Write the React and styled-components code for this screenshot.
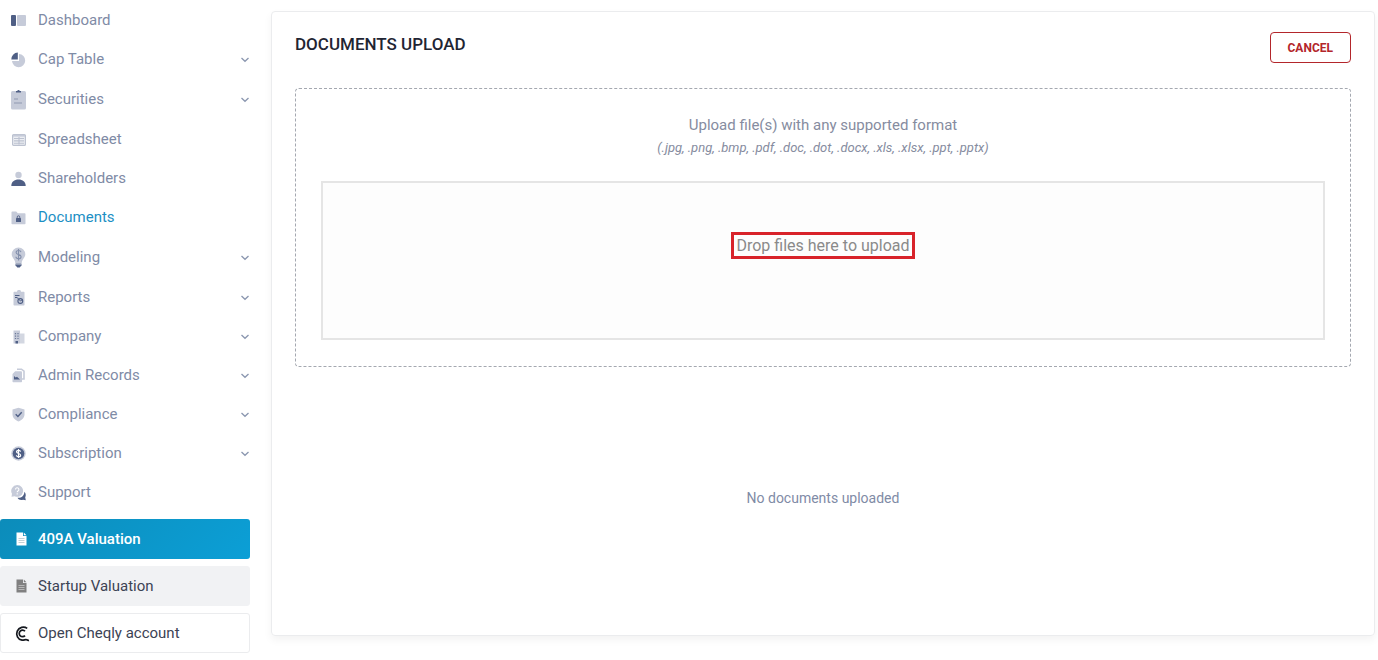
import React, { useState } from "react";
import styled, { createGlobalStyle, css } from "styled-components";

const GlobalStyle = createGlobalStyle`
  * {
    box-sizing: border-box;
  }
  body {
    margin: 0;
    background: #fff;
    font-family: Roboto, "Liberation Sans", sans-serif;
    font-size: 15px;
    line-height: 19px;
    color: #7f8ba6;
  }
`;

const Page = styled.div`
  display: flex;
  gap: 21px;
  padding-right: 3px;
`;

const Sidebar = styled.aside`
  flex: 0 0 250px;
  padding-top: 1px;
`;

const Menu = styled.ul`
  margin: 0;
  padding: 0;
  list-style: none;
`;

const MenuLink = styled.a`
  display: flex;
  align-items: center;
  padding: 10px 0 10px 11px;
  color: ${(props) => (props.$active ? "#1c8fc4" : "#7f8ba6")};
  text-decoration: none;
`;

const MenuIcon = styled.span`
  display: flex;
  flex: 0 0 15px;
  justify-content: center;
  margin-right: 12px;
`;

const MenuText = styled.span`
  flex: 1;
`;

const Chevron = styled.svg`
  width: 10px;
  height: 10px;
  fill: none;
  stroke: #8b97b0;
  stroke-width: 1.3;
`;

const Shortcuts = styled.div`
  display: flex;
  flex-direction: column;
  gap: 7px;
  margin-top: 7px;
`;

const shortcutKinds = {
  primary: css`
    background: linear-gradient(135deg, #0c8cba, #0c9fd6);
    border-color: transparent;
    background-origin: border-box;
    color: #fff;
    font-weight: 500;
  `,
  muted: css`
    background: #f1f2f4;
    border-color: #f1f2f4;
    color: #3c4354;
  `,
  outline: css`
    background: #fff;
    border-color: #ebecee;
    color: #3c4354;
  `,
};

const Shortcut = styled.a`
  display: flex;
  align-items: center;
  min-height: 40px;
  padding: 9px 12px;
  border: 1px solid;
  border-radius: 3px;
  text-decoration: none;
  ${(props) => shortcutKinds[props.$kind]}
`;

const ShortcutIcon = styled.span`
  display: flex;
  flex: 0 0 17px;
  justify-content: center;
  margin-right: 8px;
`;

const Main = styled.main`
  display: flex;
  flex: 1;
  min-width: 0;
  padding: 11px 0 17px;
`;

const Card = styled.section`
  display: flex;
  flex: 1;
  flex-direction: column;
  min-width: 0;
  padding: 20px 23px 6px;
  border: 1px solid #ebecee;
  border-radius: 4px;
  box-shadow: 0 4px 8px rgba(0, 0, 0, 0.05);
`;

const CardHeader = styled.header`
  display: flex;
  align-items: flex-start;
  justify-content: space-between;
  margin-bottom: 25px;
`;

const Title = styled.h1`
  margin: 3px 0 0;
  color: #1f2533;
  font-size: 17px;
  font-weight: 500;
  line-height: 19px;
`;

const CancelButton = styled.button`
  height: 31px;
  padding: 0 17px;
  border: 1px solid #b3262b;
  border-radius: 4px;
  background: #fff;
  color: #b3262b;
  font-family: inherit;
  font-size: 12px;
  font-weight: 700;
  cursor: pointer;
`;

const UploadBox = styled.div`
  padding: 27px 25px 26px;
  border: 1px dashed #a4a8b0;
  border-radius: 4px;
  text-align: center;
`;

const UploadTitle = styled.p`
  margin: 0;
  color: #868ca0;
`;

const UploadFormats = styled.p`
  margin: 3px 0 24px;
  color: #868ca0;
  font-size: 13px;
  font-style: italic;
`;

const DropZone = styled.label`
  display: block;
  height: 159px;
  padding-top: 49px;
  border: 2px solid #e5e5e5;
  background: #fdfdfd;
  cursor: pointer;
`;

const DropText = styled.span`
  display: inline-block;
  padding: 1px 2px;
  border: 3px solid #d8232a;
  color: #8a8a8a;
  font-size: 16px;
`;

const FileInput = styled.input`
  display: none;
`;

const EmptyState = styled.p`
  display: flex;
  flex: 1;
  align-items: center;
  justify-content: center;
  margin: 0;
  font-size: 14px;
`;

const DARK = "#4f5f85";
const LIGHT = "#c6cbd9";

const DashboardIcon = () => (
  <svg width="15" height="11" viewBox="0 0 15 11">
    <rect width="5" height="11" rx="1" fill={DARK} />
    <rect x="6" width="9" height="11" rx="1" fill={LIGHT} />
  </svg>
);

const CapTableIcon = () => (
  <svg width="15" height="16" viewBox="0 0 15 16">
    <path d="M8 2a6.6 6.6 0 1 1-7 7h7z" fill={LIGHT} />
    <path d="M6.8 0.5v7H0.3a6.8 6.8 0 0 1 6.5-7z" fill={DARK} />
  </svg>
);

const SecuritiesIcon = () => (
  <svg width="15" height="21" viewBox="0 0 15 21">
    <rect y="2" width="15" height="18.5" rx="1.6" fill={LIGHT} />
    <path d="M5 3.5V2h1.2a1.4 1.4 0 0 1 2.6 0H10v1.5z" fill={DARK} />
    <path d="M3 10h4M3 14h8" stroke="#a3abbf" strokeWidth="1.3" />
  </svg>
);

const SpreadsheetIcon = () => (
  <svg width="14" height="12" viewBox="0 0 14 12">
    <rect x="0.6" y="0.6" width="12.8" height="10.8" rx="1" fill="#eceef3" stroke="#bcc2d0" strokeWidth="1.2" />
    <path d="M1 1.7h12" stroke={LIGHT} strokeWidth="1.8" />
    <path d="M2 4.5h10M2 6.9h10M2 9.2h10M7 3v7.5" stroke="#bcc2d0" strokeWidth="1.1" />
  </svg>
);

const ShareholdersIcon = () => (
  <svg width="15" height="16" viewBox="0 0 15 16">
    <circle cx="7.5" cy="4" r="3.2" fill={LIGHT} />
    <path d="M0.3 15c0-4 3-6.4 7.2-6.4s7.2 2.4 7.2 6.4z" fill={DARK} />
  </svg>
);

const DocumentsIcon = () => (
  <svg width="15" height="14" viewBox="0 0 15 14">
    <path d="M0.5 1.3q0-.8.8-.8h3.9l1.6 1.8h6.9q.8 0 .8.8v9.4q0 .8-.8.8H1.3q-.8 0-.8-.8z" fill={LIGHT} />
    <rect x="5" y="7" width="5" height="4" rx="0.6" fill={DARK} />
    <path d="M6.2 7.2V6.1a1.3 1.3 0 0 1 2.6 0v1.1" fill="none" stroke={DARK} strokeWidth="0.9" />
  </svg>
);

const ModelingIcon = () => (
  <svg width="15" height="21" viewBox="0 0 15 21">
    <path d="M7.5 0.5a6.8 6.8 0 0 1 6.8 6.8c0 3.6-3.3 4.7-3.6 8.7H4.3C4 12 .7 10.9.7 7.3A6.8 6.8 0 0 1 7.5.5z" fill={LIGHT} />
    <path d="M10 5.2C9.7 3.9 8.8 3.5 7.5 3.5S5.1 4.2 5.1 5.500c0 2.900 5 1.400 5 4.200 0 1.300-1.100 2-2.600 2S5 11.100 4.900 9.800M7.500 2v11.500" fill="none" stroke="#8490ac" strokeWidth="1.1" />
    <path d="M4.5 16.500h6v2q0 .8-.8.8l-1 1.200H6.300l-1-1.200q-.8 0-.8-.8z" fill={DARK} />
    <path d="M4.5 17.600h6" stroke={LIGHT} strokeWidth="0.6" />
  </svg>
);

const ReportsIcon = () => (
  <svg width="12" height="16" viewBox="0 0 12 16">
    <path d="M0.5 2.5q0-.7.7-.7H4a2 2 0 0 1 4 0h2.800q.7 0 .7.700v12.300q0 .7-.7.700H1.200q-.7 0-.7-.7z" fill={LIGHT} />
    <path d="M2 5.500h4.500M2 7.500h2.500" stroke={DARK} strokeWidth="1.200" />
    <circle cx="7.300" cy="11" r="2.400" fill="none" stroke={DARK} strokeWidth="1.100" />
    <path d="M4.500 8l3 3 2-1.500" fill="none" stroke={DARK} />
  </svg>
);

const CompanyIcon = () => (
  <svg width="12" height="14" viewBox="0 0 12 14">
    <path d="M0.500 0.500h6.500v13H.500z" fill={LIGHT} />
    <path d="M7 3.500h4.500v10H7z" fill="#d3d7e1" />
    <path d="M2.500 3v6M5 3v6" stroke="#6d7a9a" strokeWidth="1.200" strokeDasharray="1.300 1.200" />
    <path d="M2.500 11h2.500v2.500H2.500z" fill={DARK} />
  </svg>
);

const AdminIcon = () => (
  <svg width="13" height="15" viewBox="0 0 13 15">
    <path d="M5 1.200h4.500L12 3.200v7.800h-2" fill="none" stroke={LIGHT} strokeWidth="1.600" />
    <path d="M3.200 3.200h5.800q1 0 1 1V13.500q0 .7-.7.700H1.200q-.7 0-.7-.7V6z" fill={LIGHT} />
    <path d="M2 11.500V8l1.700 1.500 1.300-.7 3 2.700z" fill={DARK} />
  </svg>
);

const ComplianceIcon = () => (
  <svg width="13" height="15" viewBox="0 0 13 15">
    <path d="M6.500.700l6 1.900v4.600c0 3.500-2.700 6-6 7.200-3.300-1.200-6-3.700-6-7.200V2.600z" fill={LIGHT} />
    <path d="M3.700 7.300l2.200 2.200L9.700 5.300" fill="none" stroke={DARK} strokeWidth="1.400" />
  </svg>
);

const SubscriptionIcon = () => (
  <svg width="15" height="15" viewBox="0 0 15 15">
    <circle cx="7.500" cy="7.500" r="7.200" fill={LIGHT} />
    <circle cx="7.500" cy="7.500" r="5.800" fill={DARK} />
    <path d="M9.600 5.600C9.400 4.700 8.600 4.300 7.500 4.300s-2 .6-2 1.500c0 2.100 4.100 1.300 4.100 3.400 0 1-.9 1.600-2.100 1.600S5.500 10.300 5.400 9.300M7.500 2.900v9.200" fill="none" stroke="#fff" strokeWidth="1.200" />
  </svg>
);

const SupportIcon = () => (
  <svg width="15" height="17" viewBox="0 0 15 17">
    <path d="M6.500 13.800c4 .3 6.900-2.300 6.900-6.100 1.500 1.500 1.700 4 .8 5.600l.6 3-2.800-.6c-2.200.9-4.500.1-5.500-1.900z" fill={DARK} />
    <path d="M6.200 1a5.900 5.900 0 1 1-2.600 11.200L.5 12.700l.5-2.900A5.900 5.900 0 0 1 6.200 1z" fill={LIGHT} />
    <path d="M4.500 5.500a1.700 1.700 0 1 1 2.500 1.500q-.8.500-.8 1.300M6.200 9.200v1.200" fill="none" stroke="#fff" strokeWidth="1.100" />
  </svg>
);

const FileIcon = ({ color, line }) => (
  <svg width="11" height="14" viewBox="0 0 11 14">
    <path d="M.500.500h6.500v3.500h3.500v9.500H.500z" fill={color} />
    <path d="M7.800.500l2.700 2.700H7.800z" fill={color} />
    <path d="M2.500 6.500h6M2.500 8.500h6M2.500 10.500h6" stroke={line} strokeWidth="0.800" />
  </svg>
);

const CheqlyIcon = () => (
  <svg width="16" height="17" viewBox="0 0 16 17" fill="none" stroke="#15181f" strokeWidth="1.700">
    <path d="M13.200 3.400A6.600 6.600 0 1 0 8 15.200c2.200.2 3.300-1.200 4.700-.4.800.5 1.400.7 2.300.5" />
    <path d="M11 6.200A3.300 3.300 0 1 0 11 10.600" />
  </svg>
);

const menuItems = [
  { label: "Dashboard", icon: DashboardIcon },
  { label: "Cap Table", icon: CapTableIcon, children: true },
  { label: "Securities", icon: SecuritiesIcon, children: true },
  { label: "Spreadsheet", icon: SpreadsheetIcon },
  { label: "Shareholders", icon: ShareholdersIcon },
  { label: "Documents", icon: DocumentsIcon },
  { label: "Modeling", icon: ModelingIcon, children: true },
  { label: "Reports", icon: ReportsIcon, children: true },
  { label: "Company", icon: CompanyIcon, children: true },
  { label: "Admin Records", icon: AdminIcon, children: true },
  { label: "Compliance", icon: ComplianceIcon, children: true },
  { label: "Subscription", icon: SubscriptionIcon, children: true },
  { label: "Support", icon: SupportIcon },
];

const App = () => {
  const [active, setActive] = useState("Documents");

  return (
    <>
      <GlobalStyle />
      <Page>
        <Sidebar>
          <nav>
            <Menu>
              {menuItems.map((item) => (
                <li key={item.label}>
                  <MenuLink
                    href="#"
                    $active={item.label === active}
                    onClick={() => setActive(item.label)}
                  >
                    <MenuIcon>
                      <item.icon />
                    </MenuIcon>
                    <MenuText>{item.label}</MenuText>
                    {item.children && (
                      <Chevron viewBox="0 0 10 10">
                        <path d="M1.5 3L5 6.300l3.500-3.300" />
                      </Chevron>
                    )}
                  </MenuLink>
                </li>
              ))}
            </Menu>
          </nav>
          <Shortcuts>
            <Shortcut href="#" $kind="primary">
              <ShortcutIcon>
                <FileIcon color="#fff" line="#b5c5cc" />
              </ShortcutIcon>
              409A Valuation
            </Shortcut>
            <Shortcut href="#" $kind="muted">
              <ShortcutIcon>
                <FileIcon color="#808080" line="#c4c4c4" />
              </ShortcutIcon>
              Startup Valuation
            </Shortcut>
            <Shortcut href="#" $kind="outline">
              <ShortcutIcon>
                <CheqlyIcon />
              </ShortcutIcon>
              Open Cheqly account
            </Shortcut>
          </Shortcuts>
        </Sidebar>
        <Main>
          <Card>
            <CardHeader>
              <Title>DOCUMENTS UPLOAD</Title>
              <CancelButton type="button">CANCEL</CancelButton>
            </CardHeader>
            <UploadBox>
              <UploadTitle>Upload file(s) with any supported format</UploadTitle>
              <UploadFormats>
                (.jpg, .png, .bmp, .pdf, .doc, .dot, .docx, .xls, .xlsx, .ppt, .pptx)
              </UploadFormats>
              <DropZone htmlFor="files">
                <DropText>Drop files here to upload</DropText>
                <FileInput id="files" type="file" multiple />
              </DropZone>
            </UploadBox>
            <EmptyState>No documents uploaded</EmptyState>
          </Card>
        </Main>
      </Page>
    </>
  );
};

export default App;
